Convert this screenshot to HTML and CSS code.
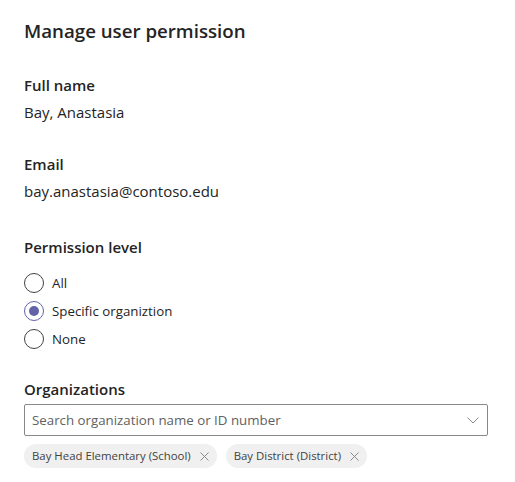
FILE: index.html
```html
<!DOCTYPE html>
<html lang="en">
<head>
<meta charset="utf-8">
<link rel="stylesheet" href="styles.css">
</head>
<body>
<main class="panel">
  <h1 class="title">Manage user permission</h1>

  <section class="field field-name">
    <div class="label">Full name</div>
    <div class="value">Bay, Anastasia</div>
  </section>

  <section class="field field-email">
    <div class="label">Email</div>
    <div class="value">bay.anastasia@contoso.edu</div>
  </section>

  <section class="field field-perm">
    <div class="label">Permission level</div>
    <div class="radios">
      <label class="radio"><span class="dot"></span><span class="radio-text">All</span></label>
      <label class="radio checked"><span class="dot"></span><span class="radio-text">Specific organiztion</span></label>
      <label class="radio"><span class="dot"></span><span class="radio-text">None</span></label>
    </div>
  </section>

  <section class="field field-org">
    <div class="label">Organizations</div>
    <div class="combo">
      <span class="placeholder">Search organization name or ID number</span>
      <svg class="chev" width="12" height="7" viewBox="0 0 12 7"><path d="M0.5 0.5 L6 6 L11.5 0.5" fill="none" stroke="#8a8a8a" stroke-width="1"/></svg>
    </div>
    <div class="chips">
      <span class="chip">Bay Head Elementary (School)<svg class="x" width="9" height="9" viewBox="0 0 9 9"><path d="M0.5 0.5 L8.5 8.5 M8.5 0.5 L0.5 8.5" stroke="#8a8a8a" stroke-width="1"/></svg></span>
      <span class="chip">Bay District (District)<svg class="x" width="9" height="9" viewBox="0 0 9 9"><path d="M0.5 0.5 L8.5 8.5 M8.5 0.5 L0.5 8.5" stroke="#8a8a8a" stroke-width="1"/></svg></span>
    </div>
  </section>
</main>
</body>
</html>
```

FILE: styles.css
```css
* { box-sizing: border-box; }
html, body { margin: 0; padding: 0; background: #ffffff; }
body {
  font-family: "Open Sans", "Noto Sans", sans-serif;
  color: #242424;
  font-size: 15px;
  line-height: 20px;
}
.panel {
  padding: 17px 27px 0 24px;
}
.title {
  margin: 0;
  font-size: 18.7px;
  line-height: 28px;
  font-weight: 600;
}
.field { display: flex; flex-direction: column; }
.field-name { margin-top: 30px; }
.field-email { margin-top: 32px; }
.field-perm { margin-top: 36px; }
.field-org { margin-top: 26px; }
.label {
  font-weight: 600;
  line-height: 20px;
}
.value { margin-top: 7px; }
.radios { display: flex; flex-direction: column; margin-top: 12px; }
.radio {
  display: flex;
  align-items: center;
  gap: 8px;
  height: 28px;
  font-size: 13.3px;
}
.dot {
  width: 20px;
  height: 20px;
  border-radius: 50%;
  border: 1px solid #424242;
  display: flex;
  align-items: center;
  justify-content: center;
}
.radio.checked .dot { border-color: #6264a7; }
.radio.checked .dot::after {
  content: "";
  width: 10px;
  height: 10px;
  border-radius: 50%;
  background: #6264a7;
}
.combo {
  margin-top: 5px;
  height: 32px;
  border: 1px solid #8a8886;
  border-radius: 2px;
  display: flex;
  align-items: center;
  justify-content: space-between;
  padding: 0 8px 0 7px;
  font-size: 13.3px;
}
.placeholder { color: #616161; }
.chips { display: flex; gap: 9px; margin-top: 8px; }
.chip {
  display: inline-flex;
  align-items: center;
  gap: 9px;
  height: 24px;
  padding: 0 8px 0 8px;
  border-radius: 12px;
  background: #f0f0f0;
  color: #424242;
  font-size: 11.4px;
}
```
